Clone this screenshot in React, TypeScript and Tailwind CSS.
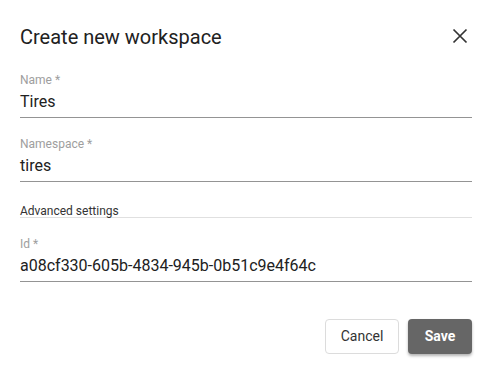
import React from "react";

function Field({ label, value }: { label: string; value: string }) {
  return (
    <div className="flex flex-col border-b border-[#949494] pb-[3px]">
      <div className="text-[12px] leading-[16px] text-[#9e9e9e]">{label}</div>
      <div className="mt-[2px] text-[16px] leading-[24px] text-[#212121]">{value}</div>
    </div>
  );
}

export default function App() {
  return (
    <div
      className="w-[493px] h-[370px] bg-white pl-5 pr-[21px] flex flex-col"
      style={{ fontFamily: "Roboto, 'Liberation Sans', sans-serif" }}
    >
      <div className="mt-[23px] flex items-start justify-between">
        <h1 className="text-[20px] leading-[28px] font-normal text-[#212121]">Create new workspace</h1>
        <button className="mt-[1px] w-[24px] h-[24px] flex items-center justify-center" aria-label="Close">
          <svg width="24" height="24" viewBox="0 0 24 24">
            <path d="M5.5 5.5 L18.5 18.5 M18.5 5.5 L5.5 18.5" stroke="#333" strokeWidth="1.7" fill="none" />
          </svg>
        </button>
      </div>
      <div className="mt-[21px]">
        <Field label="Name *" value="Tires" />
      </div>
      <div className="mt-[18px]">
        <Field label="Namespace *" value="tires" />
      </div>
      <div className="mt-[23px] border-b border-[#e0e0e0] text-[12px] leading-[12px] text-[#333]">
        Advanced settings
      </div>
      <div className="mt-[18px]">
        <Field label="Id *" value="a08cf330-605b-4834-945b-0b51c9e4f64c" />
      </div>
      <div className="mt-[37px] flex justify-end gap-[9px]">
        <button className="h-[35px] w-[74px] rounded-[4px] border border-[#dcdcdc] bg-white text-[14px] text-[#333]">
          Cancel
        </button>
        <button className="h-[35px] w-[64px] rounded-[4px] bg-[#666666] text-[14px] font-bold text-white shadow-[0_2px_3px_rgba(0,0,0,0.3)]">
          Save
        </button>
      </div>
    </div>
  );
}
